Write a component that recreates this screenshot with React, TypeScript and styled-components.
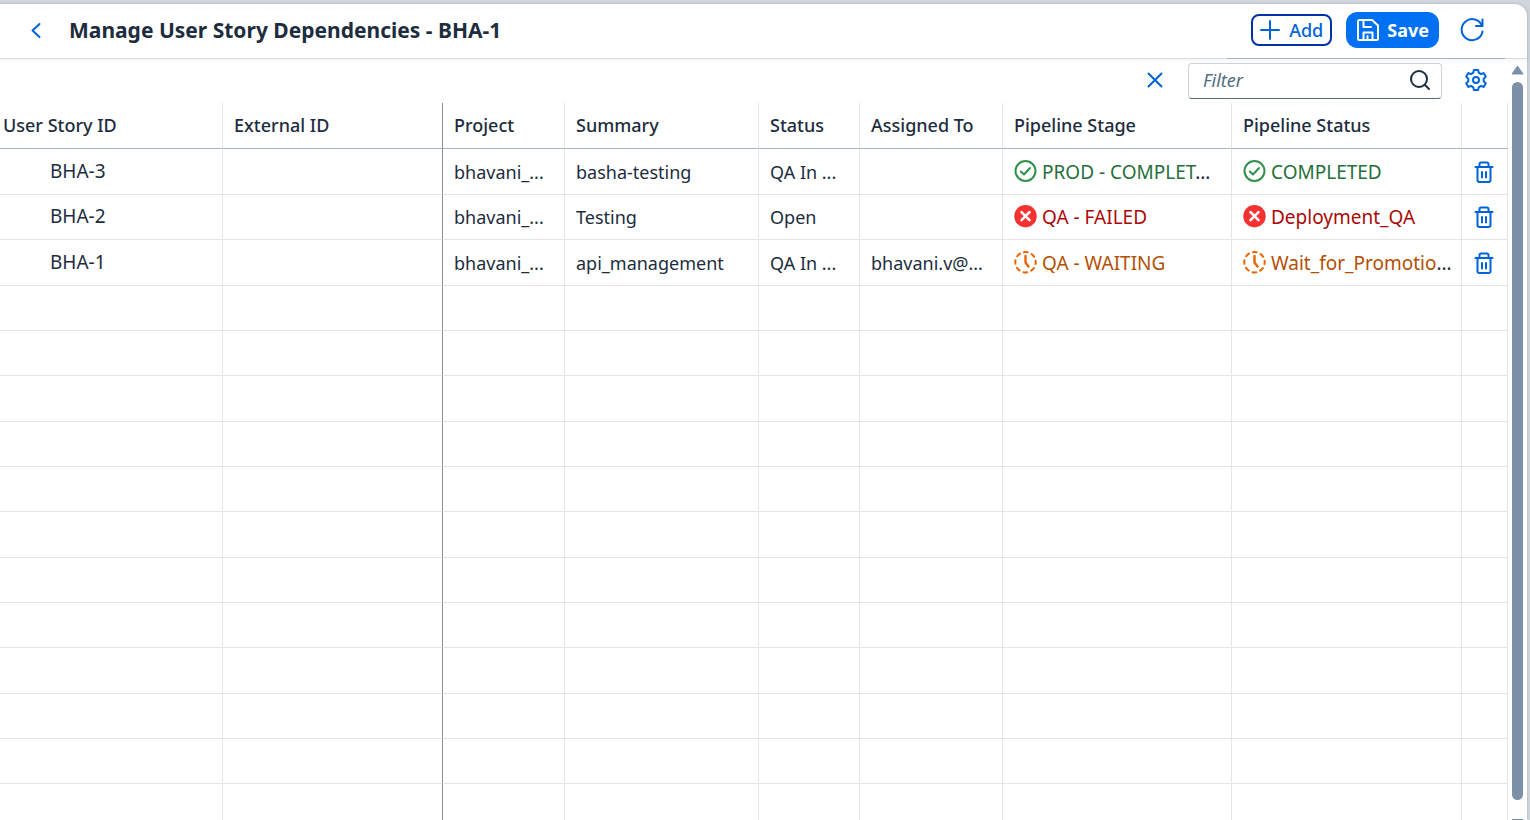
import React from "react";
import styled, { createGlobalStyle, css } from "styled-components";

const color = {
  text: "#1d2d3e",
  action: "#0064d9",
  primary: "#0070f2",
  grid: "#e5e5e5",
  headerLine: "#a8b3bd",
  scroll: "#7b91a8",
};

const GlobalStyle = createGlobalStyle`
  *, *::before, *::after { box-sizing: border-box; }
  body {
    margin: 0;
    background: #d1d7dc;
    color: ${color.text};
    font-family: "Noto Sans", "Open Sans", sans-serif;
    font-size: 18px;
    line-height: 24px;
  }
  button, input { font: inherit; }
`;

const Page = styled.div`
  height: 100vh;
  padding: 4px 3px 0 0;
  overflow: hidden;
`;

const Panel = styled.main`
  display: flex;
  flex-direction: column;
  height: 100%;
  background: #fff;
  border-top-right-radius: 12px;
  box-shadow: 0 0 3px rgba(85, 107, 130, 0.4);
`;

const Header = styled.header`
  position: relative;
  display: flex;
  align-items: center;
  flex: none;
  height: 55px;
  padding: 0 43px 2px 24px;
  border-bottom: 1px solid #d9dbdd;
  box-shadow: 0 2px 4px rgba(34, 53, 72, 0.05);

  &::after {
    content: "";
    position: absolute;
    right: 22px;
    bottom: -1px;
    width: 278px;
    height: 1px;
    background: ${color.headerLine};
  }
`;

const Title = styled.h1`
  flex: 1;
  margin: 0 0 0 21px;
  font-size: 21px;
  font-weight: 700;
  line-height: 28px;
`;

const IconButton = styled.button`
  display: flex;
  align-items: center;
  justify-content: center;
  width: 24px;
  height: 24px;
  padding: 0;
  border: 0;
  background: none;
  color: ${color.action};
  cursor: pointer;
`;

const HeaderActions = styled.div`
  display: flex;
  align-items: center;
  gap: 14px;
`;

const TextButton = styled.button<{ $primary?: boolean }>`
  display: inline-flex;
  align-items: center;
  gap: 9px;
  height: 32px;
  padding: 0 7px;
  border: 2px solid #0032a5;
  border-radius: 8px;
  background: #fff;
  color: ${color.action};
  font-weight: 500;
  cursor: pointer;

  ${(p) =>
    p.$primary &&
    css`
      height: 36px;
      gap: 7px;
      padding: 0 9px;
      border: 1px solid ${color.primary};
      border-radius: 11px;
      background: ${color.primary};
      color: #fff;
      font-weight: 700;
    `}
`;

const RefreshSlot = styled.div`
  display: flex;
  padding-left: 7px;
`;

const Body = styled.div`
  display: flex;
  flex: 1;
  min-height: 0;
`;

const Content = styled.section`
  flex: 1;
  min-width: 0;
  overflow: hidden;
`;

const Toolbar = styled.div`
  display: flex;
  align-items: center;
  justify-content: flex-end;
  height: 44px;
  padding: 0 20px 2px 0;
`;

const FilterField = styled.div`
  display: flex;
  align-items: center;
  width: 254px;
  height: 36px;
  margin: 1px 22px 0 21px;
  padding: 0 10px 1px 14px;
  border: 1px solid #cdd4da;
  border-bottom-color: #556b81;
  border-radius: 4px;
  background: #fff;
`;

const FilterInput = styled.input`
  flex: 1;
  min-width: 0;
  padding: 0;
  border: 0;
  outline: 0;
  background: none;
  color: ${color.text};

  &::placeholder {
    color: #556b82;
    font-style: italic;
    opacity: 1;
  }
`;

const Table = styled.table`
  width: 100%;
  table-layout: fixed;
  border-collapse: separate;
  border-spacing: 0;
`;

const Col = styled.col<{ $width: number }>`
  width: ${(p) => p.$width}px;
`;

const cell = css<{ $first?: boolean; $frozen?: boolean }>`
  padding: 0 11px;
  border-right: 1px solid ${(p) => (p.$frozen ? "#8c8c8c" : color.grid)};
  border-bottom: 1px solid ${color.grid};
  text-align: left;
  white-space: nowrap;
  overflow: hidden;
`;

const HeadCell = styled.th<{ $first?: boolean; $frozen?: boolean }>`
  ${cell}
  padding-left: ${(p) => (p.$first ? 3 : 11)}px;
  padding-bottom: 2px;
  border-bottom-color: ${color.headerLine};
  font-weight: 500;
`;

const Cell = styled.td<{ $first?: boolean; $frozen?: boolean }>`
  ${cell}
  ${(p) =>
    p.$first &&
    css`
      padding-left: 50px;
      padding-bottom: 2px;
      font-size: 19px;
    `}
`;

const ActionCell = styled(Cell)`
  padding: 0 0 0 10px;
`;

const Row = styled.tr`
  height: 45px;

  thead &,
  &:first-child,
  &:nth-child(3n) {
    height: 46px;
  }
`;

type Kind = "success" | "error" | "waiting";

const kindColor: Record<Kind, string> = {
  success: "#256f3a",
  error: "#aa0808",
  waiting: "#b44f00",
};

const StatusText = styled.span<{ $kind: Kind }>`
  display: flex;
  align-items: center;
  gap: 5px;
  color: ${(p) => kindColor[p.$kind]};
  font-size: 19px;

  svg { flex: none; }
`;

const Ellipsis = styled.span`
  color: ${color.text};
`;

const ScrollRail = styled.div`
  display: flex;
  flex-direction: column;
  align-items: center;
  flex: none;
  gap: 7px;
  width: 19px;
  padding-top: 6px;
`;

const ScrollThumb = styled.div`
  flex: 1;
  width: 11px;
  margin-bottom: 12px;
  border-radius: 6px;
  background: ${color.scroll};
`;

const ScrollEnd = styled.div`
  width: 11px;
  height: 1px;
  background: ${color.scroll};
`;

const stroke = { fill: "none", stroke: "currentColor", strokeWidth: 2, strokeLinecap: "round", strokeLinejoin: "round" } as const;

const BackIcon = () => (
  <svg width="24" height="24" viewBox="0 0 24 24" {...stroke}><path d="M15.500 6l-7 6.500 7 6.500" /></svg>
);
const PlusIcon = () => (
  <svg width="20" height="20" viewBox="0 0 20 20" {...stroke}><path d="M10 1v18M1 10h18" /></svg>
);
const SaveIcon = () => (
  <svg width="24" height="24" viewBox="0 0 24 24" {...stroke}>
    <path d="M3.500 2h12.600L22 7.600V20.500a1.500 1.500 0 0 1-1.500 1.500H3.500A1.500 1.500 0 0 1 2 20.500V3.500A1.500 1.500 0 0 1 3.500 2z" />
    <path d="M7.500 2.500V9h7.500M7.500 21.500v-7h9v7M11.500 18v3.500" />
  </svg>
);
const RefreshIcon = () => (
  <svg width="24" height="24" viewBox="0 0 24 24" {...stroke}>
    <path d="M22.500 1.500v6.500H16M22 8A10.500 10.500 0 1 0 22.500 13.500" />
  </svg>
);
const CloseIcon = () => (
  <svg width="24" height="24" viewBox="0 0 24 24" {...stroke}><path d="M5.500 5.500l13 13M18.500 5.500l-13 13" /></svg>
);
const SearchIcon = () => (
  <svg width="22" height="22" viewBox="0 0 22 22" {...stroke}>
    <circle cx="10" cy="10" r="8" /><path d="M16 16l4 4" />
  </svg>
);
const GearIcon = () => (
  <svg width="24" height="24" viewBox="0 0 24 24" {...stroke}>
    <path d="M9.860 1.930H14.140L14.670 4.670 17.010 6.020 19.650 5.110 21.800 8.820 19.680 10.650V13.350L21.800 15.180 19.650 18.890 17.010 17.980 14.670 19.330 14.140 22.070H9.860L9.330 19.330 6.990 17.980 4.350 18.890 2.200 15.180 4.320 13.350V10.650L2.200 8.820 4.350 5.110 6.990 6.020 9.330 4.670z" />
    <circle cx="12" cy="12" r="3" />
  </svg>
);
const TrashIcon = () => (
  <svg width="22" height="24" viewBox="0 0 22 24" {...stroke}>
    <path d="M2.500 7h17M6.500 6.500V4a1.500 1.500 0 0 1 1.500-1.500h6A1.500 1.500 0 0 1 15.500 4v2.500M4.500 7.500V20A2 2 0 0 0 6.500 22h9a2 2 0 0 0 2-2V7.500M9 12v5.500M13 12v5.500" />
  </svg>
);
const SuccessIcon = () => (
  <svg width="23" height="24" viewBox="0 0 23 24" {...stroke} stroke="#30914c">
    <circle cx="11.500" cy="11" r="10" /><path d="M6.800 11.500l3.200 3 6-6.500" />
  </svg>
);
const ErrorIcon = () => (
  <svg width="23" height="24" viewBox="0 0 23 24">
    <circle cx="11.500" cy="11.200" r="11.200" fill="#f53232" />
    <path d="M7.500 7.200l8 8M15.500 7.200l-8 8" stroke="#fff" strokeWidth="2.600" strokeLinecap="round" />
  </svg>
);
const WaitingIcon = () => (
  <svg width="23" height="24" viewBox="0 0 23 24" {...stroke} stroke="#e76500">
    <circle cx="11.500" cy="11.200" r="10.200" strokeDasharray="3.800 4.211" strokeDashoffset="1.900" />
    <path d="M11.500 5v6.500l3 4" strokeWidth="2.400" />
  </svg>
);

const icons: Record<Kind, () => React.JSX.Element> = {
  success: SuccessIcon,
  error: ErrorIcon,
  waiting: WaitingIcon,
};

function Status({ kind, text, cut }: { kind: Kind; text: string; cut?: boolean }) {
  const Icon = icons[kind];
  return (
    <StatusText $kind={kind}>
      <Icon />
      <span>
        {text}
        {cut && <Ellipsis>...</Ellipsis>}
      </span>
    </StatusText>
  );
}

const columns = [
  { label: "User Story ID", width: 223 },
  { label: "External ID", width: 220 },
  { label: "Project", width: 122 },
  { label: "Summary", width: 194 },
  { label: "Status", width: 101 },
  { label: "Assigned To", width: 143 },
  { label: "Pipeline Stage", width: 229 },
  { label: "Pipeline Status", width: 230 },
  { label: "", width: 46 },
];

type Story = {
  id: string;
  summary: string;
  status: string;
  assignee: string;
  kind: Kind;
  stage: string;
  stageCut?: boolean;
  pipeline: string;
  pipelineCut?: boolean;
};

const stories: Story[] = [
  { id: "BHA-3", summary: "basha-testing", status: "QA In ...", assignee: "", kind: "success", stage: "PROD - COMPLET", stageCut: true, pipeline: "COMPLETED" },
  { id: "BHA-2", summary: "Testing", status: "Open", assignee: "", kind: "error", stage: "QA - FAILED", pipeline: "Deployment_QA" },
  { id: "BHA-1", summary: "api_management", status: "QA In ...", assignee: "bhavani.v@...", kind: "waiting", stage: "QA - WAITING", pipeline: "Wait_for_Promotio", pipelineCut: true },
];

const emptyRows = Array.from({ length: 12 }, (_, i) => i);

export default function App() {
  return (
    <Page>
      <GlobalStyle />
      <Panel>
        <Header>
          <IconButton aria-label="Back"><BackIcon /></IconButton>
          <Title>Manage User Story Dependencies - BHA-1</Title>
          <HeaderActions>
            <TextButton><PlusIcon />Add</TextButton>
            <TextButton $primary><SaveIcon />Save</TextButton>
            <RefreshSlot>
              <IconButton aria-label="Refresh"><RefreshIcon /></IconButton>
            </RefreshSlot>
          </HeaderActions>
        </Header>
        <Body>
          <Content>
            <Toolbar>
              <IconButton aria-label="Clear filter"><CloseIcon /></IconButton>
              <FilterField>
                <FilterInput type="text" placeholder="Filter" aria-label="Filter" />
                <SearchIcon />
              </FilterField>
              <IconButton aria-label="Settings"><GearIcon /></IconButton>
            </Toolbar>
            <Table>
              <colgroup>
                {columns.map((c, i) => <Col key={i} $width={c.width} />)}
              </colgroup>
              <thead>
                <Row>
                  {columns.map((c, i) => (
                    <HeadCell key={i} $first={i === 0} $frozen={i === 1}>{c.label}</HeadCell>
                  ))}
                </Row>
              </thead>
              <tbody>
                {stories.map((s) => (
                  <Row key={s.id}>
                    <Cell $first>{s.id}</Cell>
                    <Cell $frozen />
                    <Cell>bhavani_...</Cell>
                    <Cell>{s.summary}</Cell>
                    <Cell>{s.status}</Cell>
                    <Cell>{s.assignee}</Cell>
                    <Cell><Status kind={s.kind} text={s.stage} cut={s.stageCut} /></Cell>
                    <Cell><Status kind={s.kind} text={s.pipeline} cut={s.pipelineCut} /></Cell>
                    <ActionCell>
                      <IconButton aria-label={`Delete ${s.id}`}><TrashIcon /></IconButton>
                    </ActionCell>
                  </Row>
                ))}
                {emptyRows.map((r) => (
                  <Row key={r}>
                    {columns.map((_, i) => <Cell key={i} $frozen={i === 1} />)}
                  </Row>
                ))}
              </tbody>
            </Table>
          </Content>
          <ScrollRail>
            <svg width="13" height="10" viewBox="0 0 13 10">
              <path d="M6.500 1L12 9H1z" fill={color.scroll} stroke={color.scroll} strokeLinejoin="round" />
            </svg>
            <ScrollThumb />
            <ScrollEnd />
          </ScrollRail>
        </Body>
      </Panel>
    </Page>
  );
}
